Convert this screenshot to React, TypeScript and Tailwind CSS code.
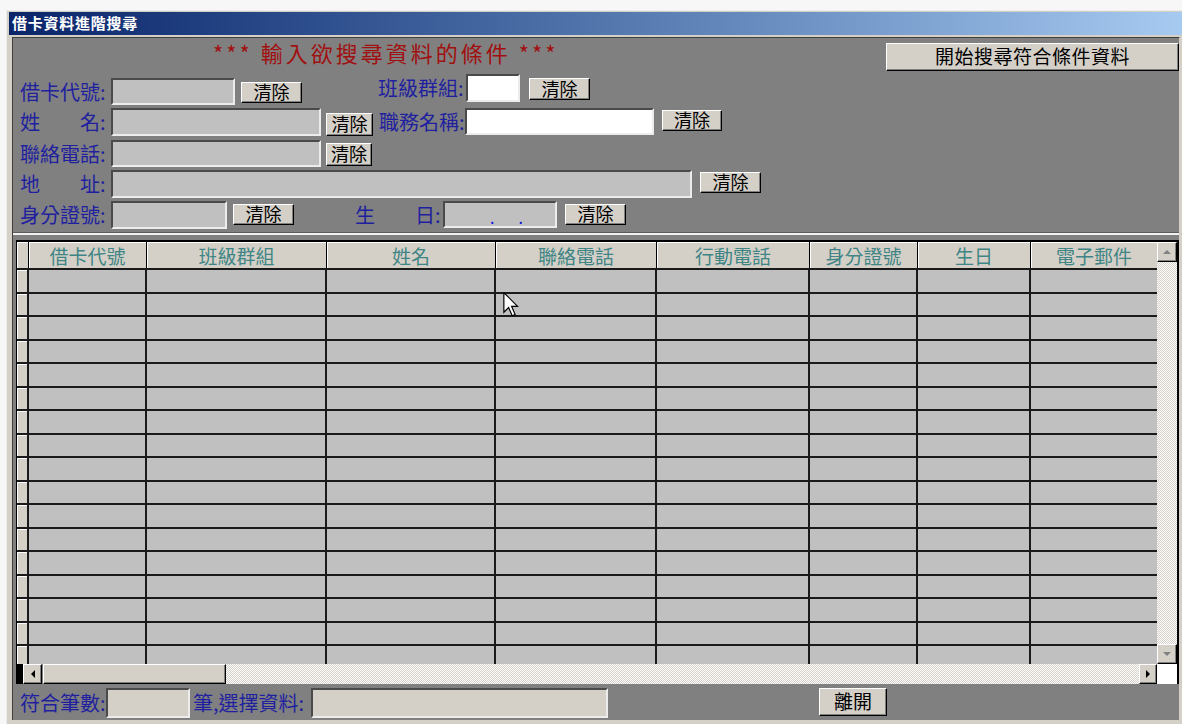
import React from 'react';

const cjk = "font-['Noto_Sans_CJK_TC','Noto_Sans_CJK_SC',sans-serif]";

const columns = [
  { title: '借卡代號', w: 'w-[118px]' },
  { title: '班級群組', w: 'w-[180px]' },
  { title: '姓名', w: 'w-[169px]' },
  { title: '聯絡電話', w: 'w-[161px]' },
  { title: '行動電話', w: 'w-[153px]' },
  { title: '身分證號', w: 'w-[108px]' },
  { title: '生日', w: 'w-[113px]' },
  { title: '電子郵件', w: 'w-[126px]' },
];

const rows = Array.from({ length: 17 }, (_, i) => i);

// raised grey push button
function Btn({ label, cls, text = 'text-[18px]' }: { label: string; cls: string; text?: string }) {
  return (
    <div
      className={`${cls} ${text} shrink-0 flex items-center justify-center pb-[3px] bg-[#d4d0c8] border border-t-white border-l-white border-b-black border-r-black shadow-[inset_-1px_-1px_0_#808080] text-black leading-none`}
    >
      {label}
    </div>
  );
}

// sunken text box
function Field({ cls, white, children }: { cls: string; white?: boolean; children?: React.ReactNode }) {
  return (
    <div
      className={`${cls} shrink-0 border-2 border-t-[#4a4a4a] border-l-[#4a4a4a] border-b-[#ececec] border-r-[#ececec] ${white ? 'bg-white' : 'bg-[#c0c0c0]'}`}
    >
      {children}
    </div>
  );
}

function Label({ text, cls }: { text: string; cls: string }) {
  return (
    <div className={`${cls} shrink-0 flex items-center text-[20px] leading-none text-[#1f1f9f] whitespace-pre`}>
      {text}
    </div>
  );
}

function ScrollBtn({ dir, cls }: { dir: 'up' | 'down' | 'left' | 'right'; cls: string }) {
  const tri =
    dir === 'up'
      ? 'border-l-[4px] border-r-[4px] border-b-[4px] border-l-transparent border-r-transparent border-b-[#808080]'
      : dir === 'down'
        ? 'border-l-[4px] border-r-[4px] border-t-[4px] border-l-transparent border-r-transparent border-t-[#808080]'
        : dir === 'left'
          ? 'border-t-[4px] border-b-[4px] border-r-[4px] border-t-transparent border-b-transparent border-r-black'
          : 'border-t-[4px] border-b-[4px] border-l-[4px] border-t-transparent border-b-transparent border-l-black';
  return (
    <div
      className={`${cls} shrink-0 flex items-center justify-center bg-[#d4d0c8] border border-t-white border-l-white border-b-black border-r-black shadow-[inset_-1px_-1px_0_#808080]`}
    >
      <div className={`w-0 h-0 ${tri}`} />
    </div>
  );
}

const track = 'bg-[image:repeating-conic-gradient(#d4d0c8_0_25%,#ffffff_0_50%)] bg-[length:2px_2px]';

export default function App() {
  return (
    <div className={`relative w-[1182px] h-[724px] overflow-hidden bg-[#f7f7f7] ${cjk}`}>
      {/* window frame */}
      <div className="ml-[6px] mt-[10px] w-[1176px] h-[714px] bg-[#d4d0c8] border-t border-l border-t-[#ececec] border-l-[#ececec] pl-[2px] pt-[1px]">
        {/* title bar */}
        <div className="h-[23px] flex items-center pl-[3px] bg-gradient-to-r from-[#0a246a] to-[#a6caf0] text-white font-bold text-[15px] tracking-[0.75px]">
          借卡資料進階搜尋
        </div>

        {/* form body */}
        <div className="mt-[2px] ml-[3px] w-[1168px] h-[683px] bg-[#808080] border-t border-l border-[#404040] border-r border-r-[#d4d0c8]">
          {/* heading + search button */}
          <div className="h-[36px] flex items-start">
            <div className="ml-[200px] h-[28px] leading-[28px] text-[22px] tracking-[3px] text-[#a01010]">
              *** 輸入欲搜尋資料的條件 ***
            </div>
            <Btn label="開始搜尋符合條件資料" cls="ml-auto mt-[5px] w-[293px] h-[28px]" text="text-[19px] tracking-[0.5px]" />
          </div>

          {/* row 1 */}
          <div className="h-[34px] flex items-start">
            <Label text="借卡代號:" cls="mt-[4px] h-[27px] w-[98px] pl-[7px]" />
            <Field cls="mt-[4px] w-[124px] h-[27px]" />
            <Btn label="清除" cls="ml-[6px] mt-[8px] w-[61px] h-[21px]" />
            <Label text="班級群組:" cls="ml-[76px] h-[28px] w-[88px]" />
            <Field white cls="w-[54px] h-[28px]" />
            <Btn label="清除" cls="ml-[9px] mt-[4px] w-[61px] h-[22px]" />
          </div>

          {/* row 2 */}
          <div className="h-[32px] flex items-start">
            <Label text="姓　　名:" cls="h-[28px] w-[98px] pl-[7px]" />
            <Field cls="w-[210px] h-[28px]" />
            <Btn label="清除" cls="ml-[5px] mt-[5px] w-[47px] h-[23px]" />
            <Label text="職務名稱:" cls="ml-[6px] h-[27px] w-[86px]" />
            <Field white cls="w-[189px] h-[27px]" />
            <Btn label="清除" cls="ml-[8px] mt-[2px] w-[60px] h-[21px]" />
          </div>

          {/* row 3 */}
          <div className="h-[30px] flex items-start">
            <Label text="聯絡電話:" cls="h-[27px] w-[98px] pl-[7px]" />
            <Field cls="w-[210px] h-[27px]" />
            <Btn label="清除" cls="ml-[5px] mt-[3px] w-[46px] h-[23px]" />
          </div>

          {/* row 4 */}
          <div className="h-[31px] flex items-start">
            <Label text="地　　址:" cls="h-[28px] w-[98px] pl-[7px]" />
            <Field cls="w-[581px] h-[28px]" />
            <Btn label="清除" cls="ml-[8px] mt-[2px] w-[61px] h-[21px]" />
          </div>

          {/* row 5 */}
          <div className="h-[31px] flex items-start">
            <Label text="身分證號:" cls="h-[28px] w-[98px] pl-[7px]" />
            <Field cls="w-[116px] h-[28px]" />
            <Btn label="清除" cls="ml-[6px] mt-[3px] w-[61px] h-[21px]" />
            <Label text="生　　日:" cls="ml-[61px] h-[28px] w-[88px]" />
            <Field cls="w-[114px] h-[27px]">
              <div className="h-full flex items-end pb-[1px] pl-[45px] text-[16px] leading-none text-[#1010e0]">
                <span>.</span>
                <span className="ml-[24px]">.</span>
              </div>
            </Field>
            <Btn label="清除" cls="ml-[8px] mt-[3px] w-[61px] h-[21px]" />
          </div>

          {/* divider line */}
          <div className="h-[1px] bg-[#5a5a5a]" />
          <div className="h-[2px] bg-[#f0f0f0]" />
          <div className="h-[5px]" />

          {/* datasheet */}
          <div className="ml-[3px] w-[1163px] border-l border-t-2 border-r-2 border-black">
            <div className="flex h-[422px]">
              <div className="w-[1140px] flex flex-col">
                {/* header */}
                <div className="h-[28px] flex border-b-2 border-[#1a1a1a] shrink-0">
                  <div className="w-[12px] bg-[#d4d0c8] border-r border-black shadow-[inset_1px_1px_0_#ffffff]" />
                  {columns.map((c, i) => (
                    <div
                      key={c.title}
                      className={`${c.w} flex items-center justify-center pt-[1px] bg-[#d4d0c8] shadow-[inset_1px_1px_0_#ffffff] text-[19px] leading-none text-[#3f8585] ${i < columns.length - 1 ? 'border-r border-black' : ''}`}
                    >
                      {c.title}
                    </div>
                  ))}
                </div>
                {/* rows */}
                <div className="h-[394px] overflow-hidden">
                  {rows.map((r) => (
                    <div key={r} className="h-[23.5px] flex border-b-2 border-[#1a1a1a]">
                      <div className="w-[12px] bg-[#d4d0c8] border-r-2 border-[#1a1a1a] shadow-[inset_1px_1px_0_#ffffff]" />
                      {columns.map((c, i) => (
                        <div
                          key={c.title}
                          className={`${c.w} bg-[#c0c0c0] ${i < columns.length - 1 ? 'border-r-2 border-[#1a1a1a]' : ''}`}
                        />
                      ))}
                    </div>
                  ))}
                </div>
              </div>
              {/* vertical scrollbar */}
              <div className="w-[20px] flex flex-col">
                <ScrollBtn dir="up" cls="w-[20px] h-[20px]" />
                <div className={`flex-1 ${track}`} />
                <ScrollBtn dir="down" cls="w-[20px] h-[20px]" />
              </div>
            </div>
            {/* horizontal scrollbar */}
            <div className="flex h-[20px]">
              <div className="w-[1140px] flex">
                <div className="w-[6px] bg-black" />
                <ScrollBtn dir="left" cls="w-[19px] h-[20px]" />
                <div className="ml-[1px] w-[183px] h-[20px] bg-[#d4d0c8] border border-t-white border-l-white border-b-black border-r-black shadow-[inset_-1px_-1px_0_#808080]" />
                <div className={`flex-1 ${track}`} />
                <ScrollBtn dir="right" cls="w-[18px] h-[20px]" />
              </div>
              <div className="w-[20px] bg-white" />
            </div>
          </div>

          {/* footer */}
          <div className="h-[35px] flex items-start">
            <Label text="符合筆數:" cls="mt-[4px] h-[30px] w-[93px] pl-[7px]" />
            <Field cls="mt-[4px] w-[84px] h-[30px] !bg-[#d4d0c8]" />
            <Label text="筆,選擇資料:" cls="mt-[4px] h-[30px] w-[121px] pl-[3px]" />
            <Field cls="mt-[4px] w-[297px] h-[30px] !bg-[#d4d0c8]" />
            <Btn label="離開" cls="ml-[211px] mt-[4px] w-[68px] h-[28px]" text="text-[19px]" />
          </div>
        </div>
      </div>

      {/* mouse pointer */}
      <svg className="absolute left-[503px] top-[292px]" width="16" height="25" viewBox="0 0 13 21">
        <path d="M0.5 0.5 L0.5 17 L4.5 13 L7.5 20 L10 19 L7 12 L12 12 Z" fill="#ffffff" stroke="#000000" strokeWidth="1" strokeLinejoin="miter" />
      </svg>
    </div>
  );
}
